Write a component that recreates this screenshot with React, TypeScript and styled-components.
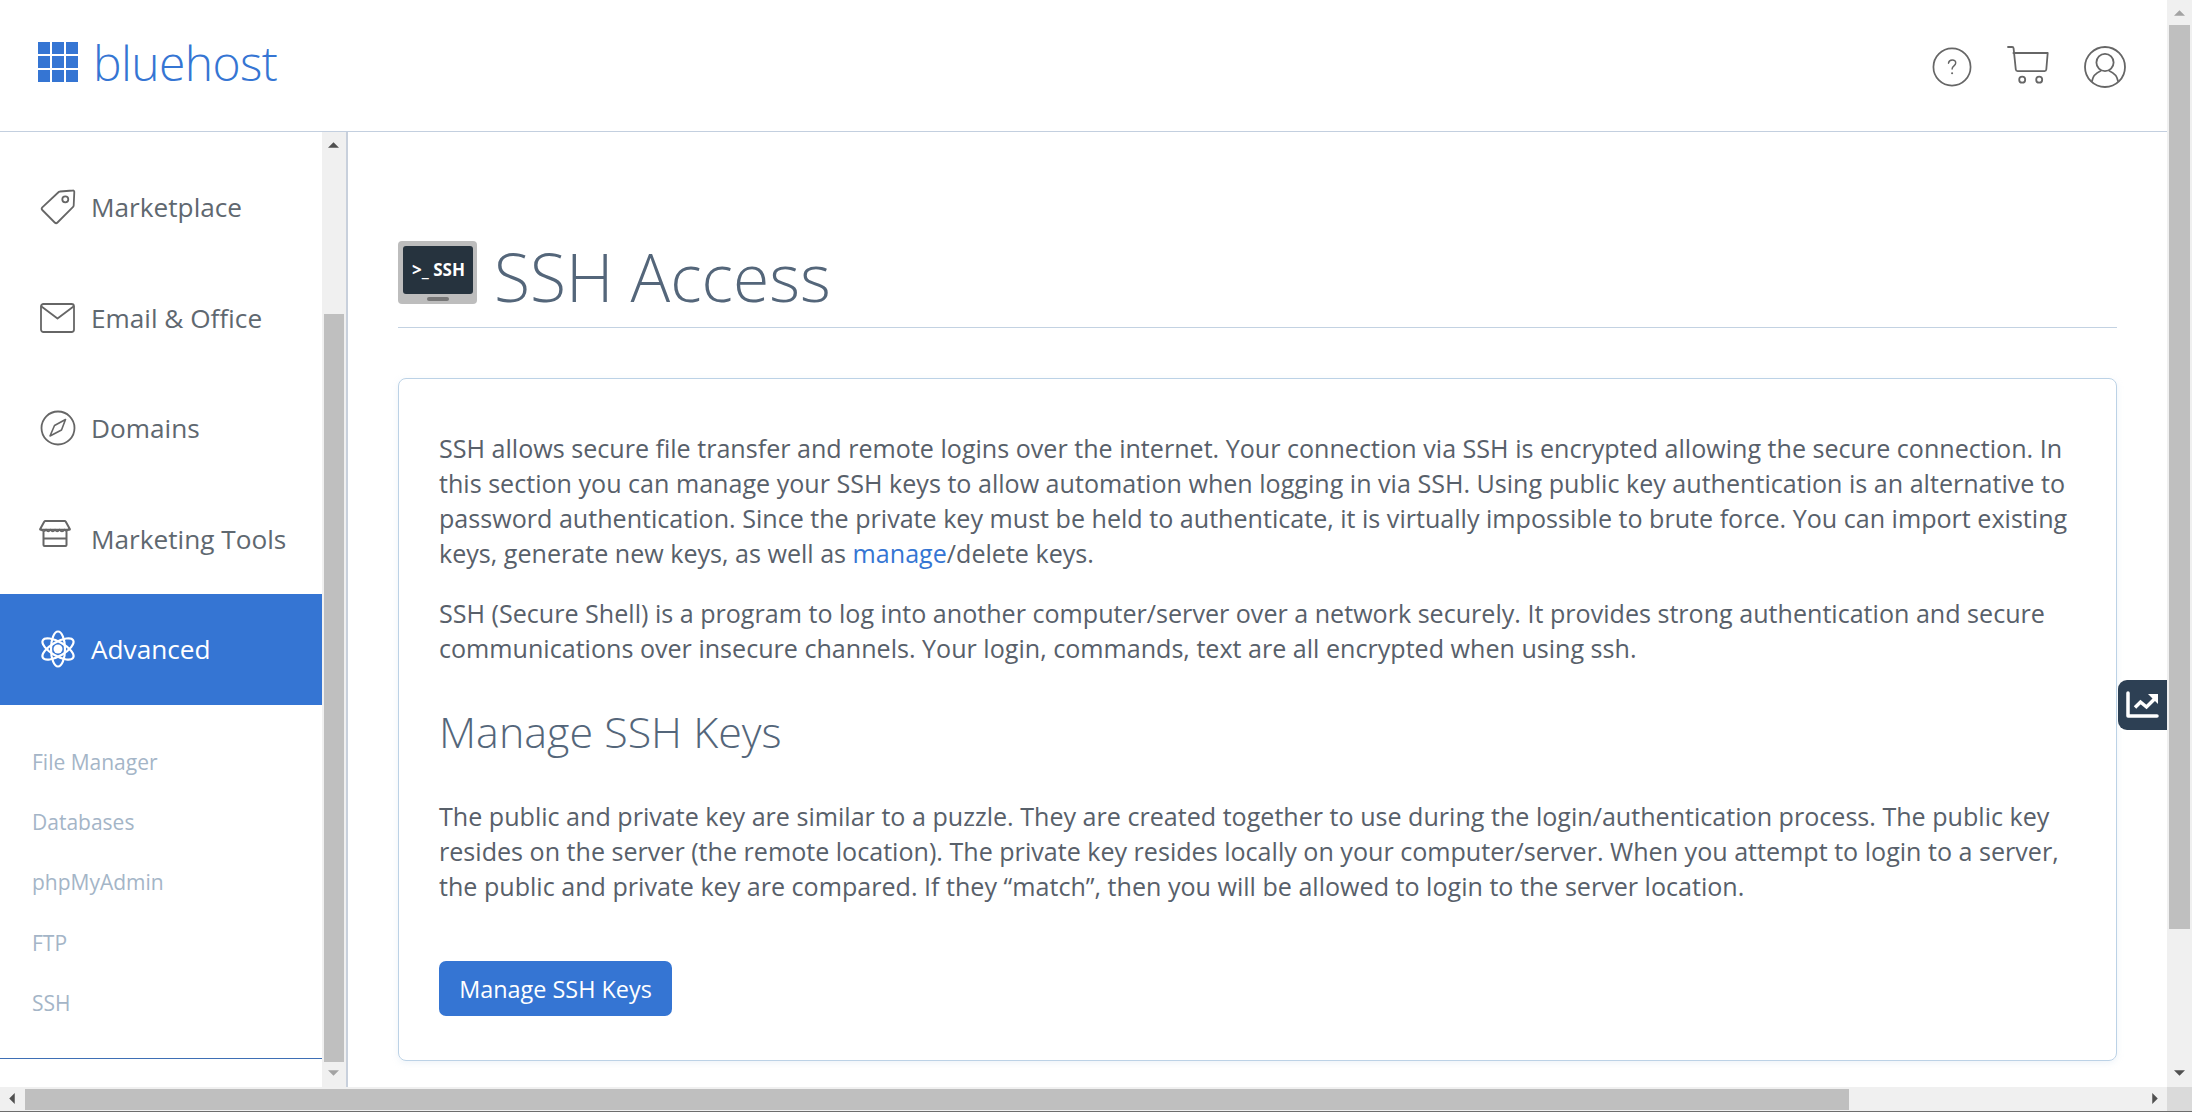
import { ReactNode } from 'react';
import styled, { createGlobalStyle } from 'styled-components';

const GlobalStyle = createGlobalStyle`
  html, body {
    margin: 0;
    padding: 0;
    height: 100%;
    overflow: hidden;
    background: #fff;
  }

  * {
    box-sizing: border-box;
  }

  #root {
    height: 100%;
  }
`;

const Window = styled.div`
  display: grid;
  grid-template-columns: 1fr 25px;
  grid-template-rows: 1fr 24px;
  width: 2192px;
  height: 1112px;
  border-bottom: 1px solid #6d6d6d;
  font-family: 'Open Sans', 'Liberation Sans', sans-serif;
`;

const Page = styled.div`
  position: relative;
  display: flex;
  flex-direction: column;
  min-width: 0;
  min-height: 0;
`;

const Header = styled.header`
  display: flex;
  align-items: center;
  justify-content: space-between;
  flex: 0 0 132px;
  padding: 0 41px 0 38px;
  border-bottom: 1px solid #c3cfdf;
`;

const Logo = styled.div`
  display: flex;
  align-items: center;
  gap: 15px;
  margin-top: -7px;
`;

const LogoText = styled.span`
  color: #3575d3;
  font-size: 48px;
  font-weight: 300;
  line-height: 50px;
  letter-spacing: -0.6px;
  position: relative;
  top: 1px;
`;

const HeaderIcons = styled.div`
  display: flex;
  align-items: center;
  gap: 35px;
  margin-top: 2px;
`;

const Body = styled.div`
  display: flex;
  flex: 1;
  min-height: 0;
`;

const Sidebar = styled.aside`
  display: flex;
  flex: 0 0 348px;
  border-right: 2px solid #c8d0dc;
`;

const Nav = styled.nav`
  flex: 0 0 322px;
  padding-top: 20px;
`;

const NavItem = styled.a<{ $active?: boolean }>`
  display: flex;
  align-items: center;
  gap: 15px;
  height: 110.5px;
  padding-left: 40px;
  background: ${(props) => (props.$active ? '#3575d3' : 'transparent')};
  color: ${(props) => (props.$active ? '#fff' : '#5f6870')};
  font-size: 26.2px;
  line-height: 34px;
`;

const NavIcon = styled.span<{ $lift?: number; $nudge?: number }>`
  display: flex;
  flex: 0 0 36px;
  justify-content: center;
  position: relative;
  top: ${(props) => -(props.$lift ?? 0)}px;
  left: ${(props) => -(props.$nudge ?? 0)}px;
`;

const SubList = styled.div`
  margin-top: 27px;
  padding-bottom: 25px;
  border-bottom: 1px solid #3e6fb5;
`;

const SubItem = styled.a`
  display: flex;
  align-items: center;
  height: 60.4px;
  padding-left: 32px;
  color: #a4b5c7;
  font-size: 21px;
`;

const Main = styled.main`
  flex: 1;
  min-width: 0;
  padding: 109px 50px 0 50px;
`;

const TitleRow = styled.div`
  display: flex;
  align-items: center;
  gap: 17px;
  height: 87px;
  border-bottom: 1px solid #c3d2e2;
  padding-bottom: 24px;
`;

const Title = styled.h1`
  margin: 8px 0 0;
  color: #54667a;
  font-size: 66px;
  font-weight: 300;
  line-height: 64px;
`;

const Card = styled.section`
  margin-top: 50px;
  height: 683px;
  padding: 52px 40px 0 40px;
  border: 1px solid #bcd2e6;
  border-radius: 8px;
  box-shadow: 0 2px 6px rgba(188, 210, 230, 0.25);
`;

const Paragraph = styled.p`
  margin: 0 0 25px;
  color: #58606a;
  font-size: 25.1px;
  line-height: 35px;
`;

const TextLink = styled.a`
  color: #3575d3;
`;

const SubTitle = styled.h2`
  margin: 38px 0 39px;
  color: #54667a;
  font-size: 43px;
  font-weight: 300;
  line-height: 56px;
`;

const PrimaryButton = styled.button`
  display: block;
  width: 233px;
  height: 55px;
  margin-top: 57px;
  padding: 0;
  border: 0;
  border-radius: 7px;
  background: #3575d3;
  color: #fff;
  font-family: inherit;
  font-size: 23.4px;
`;

const Widget = styled.div`
  position: absolute;
  right: 0;
  top: 680px;
  display: flex;
  align-items: center;
  justify-content: center;
  width: 49px;
  height: 50px;
  border-radius: 9px 0 0 9px;
  background: #2d4054;
`;

const VScrollbar = styled.div<{ $thumbTop: number; $thumbHeight: number }>`
  position: relative;
  flex: 0 0 24px;
  background: #f0f0f0;

  &::before {
    content: '';
    position: absolute;
    left: 2px;
    right: 2px;
    top: ${(props) => props.$thumbTop}px;
    height: ${(props) => props.$thumbHeight}px;
    background: #bfbfbf;
  }
`;

const HScrollbar = styled.div`
  position: relative;
  background: #f0f0f0;

  &::before {
    content: '';
    position: absolute;
    left: 25px;
    top: 2px;
    bottom: 1px;
    width: 1824px;
    background: #bfbfbf;
  }
`;

const Corner = styled.div`
  background: #dadada;
`;

const ArrowBox = styled.svg<{ $x: number; $y: number }>`
  position: absolute;
  left: ${(props) => props.$x}px;
  top: ${(props) => props.$y}px;
`;

const RightScroll = styled(VScrollbar)`
  width: 25px;
`;

const Arrow = ({ dir, x, y, color }: { dir: 'up' | 'down' | 'left' | 'right'; x: number; y: number; color: string }) => {
  const points = {
    up: '0,11 11,0 22,11',
    down: '0,0 22,0 11,11',
    left: '11,0 11,22 0,11',
    right: '0,0 0,22 11,11',
  };
  const horizontal = dir === 'left' || dir === 'right';
  return (
    <ArrowBox $x={x} $y={y} width={horizontal ? 6 : 11} height={horizontal ? 11 : 6} viewBox={horizontal ? '0 0 11 22' : '0 0 22 11'}>
      <polygon points={points[dir]} fill={color} />
    </ArrowBox>
  );
};

const stroke = { fill: 'none', stroke: '#666', strokeWidth: 1.8, strokeLinecap: 'round', strokeLinejoin: 'round' } as const;

const LogoMark = () => (
  <svg width="40" height="40" viewBox="0 0 40 40">
    {[0, 14, 28].flatMap((y) =>
      [0, 14, 28].map((x) => <rect key={`${x}-${y}`} x={x} y={y} width="12" height="12" fill="#3575d3" />),
    )}
  </svg>
);

const HelpIcon = () => (
  <svg width="40" height="40" viewBox="0 0 42 42">
    <circle cx="21" cy="21" r="19.5" {...stroke} />
    <path d="M17.3 17c.4-2.2 2-3.3 3.9-3.3 2.2 0 3.7 1.4 3.7 3.2 0 2.9-3.8 3-3.8 6.2" {...stroke} strokeWidth={1.5} />
    <circle cx="21.1" cy="27.5" r="1.1" fill="#666" />
  </svg>
);

const CartIcon = () => (
  <svg width="42" height="42" viewBox="0 0 42 42">
    <path d="M1 1h4.2c.8 0 1.3.5 1.4 1.3l2.2 21.2c.1 1 .8 1.6 1.8 1.6h27c1 0 1.6-.6 1.7-1.6L40.7 7H6.4" {...stroke} />
    <circle cx="15.2" cy="33.7" r="3" {...stroke} />
    <circle cx="32.2" cy="33.7" r="3" {...stroke} />
  </svg>
);

const UserIcon = () => (
  <svg width="42" height="42" viewBox="0 0 42 42">
    <circle cx="21" cy="21" r="20" {...stroke} />
    <circle cx="21" cy="16.5" r="8.6" {...stroke} />
    <path d="M8 35c1-5.500 5-8.500 8.500-10M34 35c-1-5.500-5-8.500-8.500-10" {...stroke} />
  </svg>
);

const TagIcon = () => (
  <svg width="36" height="36" viewBox="0 0 36 36">
    <path
      d="M20 2.500 32.800 1.500c.9-.1 1.500.5 1.500 1.400l-.6 13.600c0 .5-.2.900-.6 1.300L17.500 33.500c-.8.800-2 .8-2.800 0L2.300 21c-.7-.7-.7-1.900 0-2.700L18.700 3c.4-.3.800-.5 1.300-.5z"
      {...stroke}
    />
    <circle cx="25.300" cy="10.300" r="3" {...stroke} />
  </svg>
);

const MailIcon = () => (
  <svg width="36" height="30" viewBox="0 0 36 30">
    <rect x="1" y="1" width="33" height="28" rx="2.500" {...stroke} />
    <path d="M1.500 3.500 17.500 15.500 33.500 3.500" {...stroke} />
  </svg>
);

const CompassIcon = () => (
  <svg width="36" height="36" viewBox="0 0 36 36">
    <circle cx="18" cy="18" r="16.500" {...stroke} />
    <path d="M25.500 9.500 21.500 20 10 26 14.500 15.500z" {...stroke} strokeWidth={1.6} />
  </svg>
);

const StoreIcon = () => (
  <svg width="32" height="27" viewBox="0 0 32 27">
    <path d="M6.500 1h19c.6 0 1 .2 1.300.7L30.800 9c.2.400 0 .8-.4.800H1.600c-.4 0-.6-.4-.4-.8l4-7.300c.3-.5.700-.7 1.300-.7z" {...stroke} strokeWidth={2} />
    <path d="M2 9c1.500 3 3.500 3 5 .5 1.500 2.500 3.500 2.500 4.500 0 1.500 2.500 3.500 2.500 4.500 0 1 2.500 3 2.500 4.500 0 1.500 2.500 3.500 2.500 5 0 1.500 2.500 3 2 4-.5" {...stroke} strokeWidth={1.6} />
    <path d="M4.500 12.500V25c0 .6.400 1 1 1h21c.6 0 1-.4 1-1V12.500M4.500 18.500h23" {...stroke} strokeWidth={2} />
  </svg>
);

const AtomIcon = () => (
  <svg width="36" height="38" viewBox="0 0 36 38" fill="none" stroke="#fff" strokeWidth="2.2">
    <ellipse cx="18" cy="19" rx="7" ry="17.500" />
    <ellipse cx="18" cy="19" rx="7" ry="17.500" transform="rotate(60 18 19)" />
    <ellipse cx="18" cy="19" rx="7" ry="17.500" transform="rotate(-60 18 19)" />
    <circle cx="18" cy="19" r="4.500" fill="#fff" stroke="none" />
  </svg>
);

const SshIcon = () => (
  <svg width="79" height="63" viewBox="0 0 79 63">
    <rect width="79" height="63" rx="4" fill="#bdbdbd" />
    <rect x="5" y="5" width="70" height="48" rx="3" fill="#26333e" />
    <rect x="29" y="56" width="22" height="4" rx="2" fill="#777" />
    <text x="14" y="35" fill="#fff" fontFamily="'Open Sans', sans-serif" fontSize="17" fontWeight="700" textLength="53">
      &gt;_ SSH
    </text>
  </svg>
);

const ChartIcon = () => (
  <svg width="34" height="28" viewBox="0 0 34 28">
    <path d="M2 2v23h29" fill="none" stroke="#fff" strokeWidth="3.500" strokeLinecap="round" strokeLinejoin="round" />
    <path d="M9 16.500 14.500 11l6 5 8-8" fill="none" stroke="#fff" strokeWidth="3.500" />
    <path d="M22 3h10v10z" fill="#fff" />
  </svg>
);

type NavEntry = { label: string; icon: ReactNode; lift?: number; nudge?: number; active?: boolean };

const navItems: NavEntry[] = [
  { label: 'Marketplace', icon: <TagIcon /> },
  { label: 'Email & Office', icon: <MailIcon /> },
  { label: 'Domains', icon: <CompassIcon /> },
  { label: 'Marketing Tools', icon: <StoreIcon />, lift: 5, nudge: 3 },
  { label: 'Advanced', icon: <AtomIcon />, active: true },
];

const subItems = ['File Manager', 'Databases', 'phpMyAdmin', 'FTP', 'SSH'];

export default function App() {
  return (
    <Window>
      <GlobalStyle />
      <Page>
        <Header>
          <Logo>
            <LogoMark />
            <LogoText>bluehost</LogoText>
          </Logo>
          <HeaderIcons>
            <HelpIcon />
            <CartIcon />
            <UserIcon />
          </HeaderIcons>
        </Header>
        <Body>
          <Sidebar>
            <Nav>
              {navItems.map((item) => (
                <NavItem key={item.label} $active={item.active}>
                  <NavIcon $lift={item.lift} $nudge={item.nudge}>
                    {item.icon}
                  </NavIcon>
                  <span>{item.label}</span>
                </NavItem>
              ))}
              <SubList>
                {subItems.map((item) => (
                  <SubItem key={item}>{item}</SubItem>
                ))}
              </SubList>
            </Nav>
            <VScrollbar $thumbTop={182} $thumbHeight={748}>
              <Arrow dir="up" x={6} y={10} color="#505050" />
              <Arrow dir="down" x={6} y={938} color="#a3a3a3" />
            </VScrollbar>
          </Sidebar>
          <Main>
            <TitleRow>
              <SshIcon />
              <Title>SSH Access</Title>
            </TitleRow>
            <Card>
              <Paragraph>
                SSH allows secure file transfer and remote logins over the internet. Your connection via SSH is
                encrypted allowing the secure connection. In this section you can manage your SSH keys to allow
                automation when logging in via SSH. Using public key authentication is an alternative to password
                authentication. Since the private key must be held to authenticate, it is virtually impossible to brute
                force. You can import existing keys, generate new keys, as well as <TextLink>manage</TextLink>/delete
                keys.
              </Paragraph>
              <Paragraph>
                SSH (Secure Shell) is a program to log into another computer/server over a network securely. It provides
                strong authentication and secure communications over insecure channels. Your login, commands, text are
                all encrypted when using ssh.
              </Paragraph>
              <SubTitle>Manage SSH Keys</SubTitle>
              <Paragraph>
                The public and private key are similar to a puzzle. They are created together to use during the
                login/authentication process. The public key resides on the server (the remote location). The private
                key resides locally on your computer/server. When you attempt to login to a server, the public and
                private key are compared. If they “match”, then you will be allowed to login to the server location.
              </Paragraph>
              <PrimaryButton>Manage SSH Keys</PrimaryButton>
            </Card>
          </Main>
        </Body>
        <Widget>
          <ChartIcon />
        </Widget>
      </Page>
      <RightScroll $thumbTop={25} $thumbHeight={904}>
        <Arrow dir="up" x={7} y={10} color="#a3a3a3" />
        <Arrow dir="down" x={7} y={1070} color="#505050" />
      </RightScroll>
      <HScrollbar>
        <Arrow dir="left" x={9} y={6} color="#505050" />
        <Arrow dir="right" x={2152} y={6} color="#505050" />
      </HScrollbar>
      <Corner />
    </Window>
  );
}
